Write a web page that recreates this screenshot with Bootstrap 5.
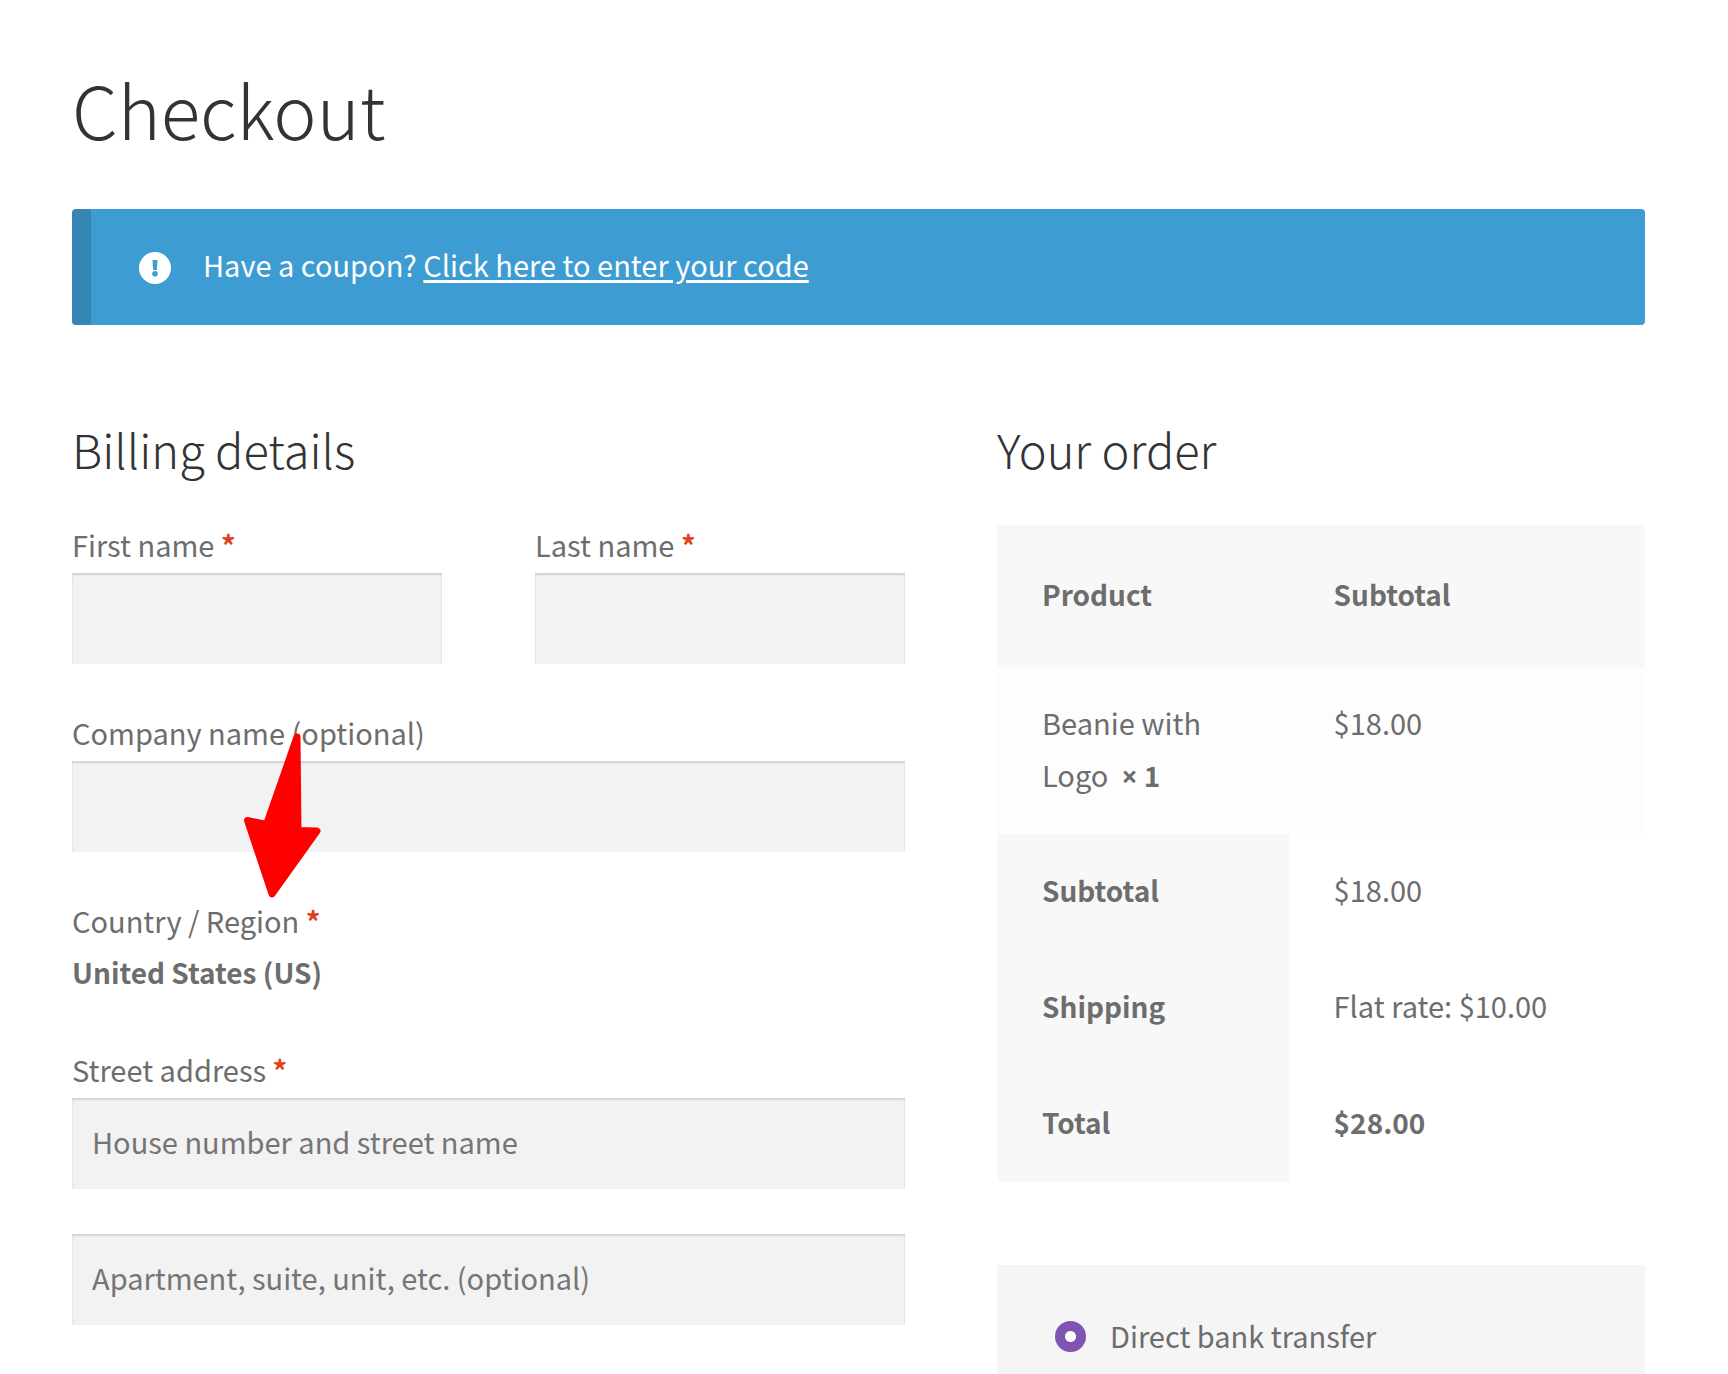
<!DOCTYPE html>
<html lang="en">
<head>
<meta charset="utf-8">
<meta name="viewport" content="width=device-width, initial-scale=1">
<title>Checkout</title>
<link rel="stylesheet" href="https://cdn.jsdelivr.net/npm/bootstrap@5.3.0/dist/css/bootstrap.min.css">
<style>
  body { font-family: "Source Sans Pro", "Noto Sans CJK SC", "Noto Sans", sans-serif; font-size: 29px; line-height: 52px; color: #6d6d6d; background: #fff; }
  .page { padding: 54px 83px 0 72px; }
  h1, h2 { color: #333; font-weight: 300; margin: 0; }
  h1 { font-size: 73px; line-height: 108px; margin-bottom: 47px; }
  h2 { font-size: 47px; line-height: 68px; margin-bottom: 38px; }
  .order h2 { margin-bottom: 42px; }
  strong, th { font-size: 28px; font-weight: 700; }
  td strong { line-height: 1; }
  .coupon { background: #3d9cd2; border: 0; border-left: 19px solid #3585b5; border-radius: 4px; color: #fff; padding: 29px 48px 35px; gap: 32px; margin-bottom: 90px; }
  .coupon a { color: #fff; text-decoration-thickness: 3px; text-underline-offset: 3px; }
  .coupon svg { width: 32px; height: 32px; flex: none; margin-top: 8px; }
  .columns { gap: 92px; }
  .billing { flex: 833 1 0; min-width: 0; }
  .order { flex: 648 1 0; min-width: 0; }
  .fields { gap: 45px; }
  .names { gap: 93px; }
  .form-label { display: block; line-height: 46px; margin: 0 0 6px; }
  .need { color: #e2401c; font-weight: 700; line-height: 1; }
  .box { height: 91px; border: 0; border-radius: 0; background: #f2f2f2; color: #6d6d6d; font-size: 29px; padding: 0 20px 5px; box-shadow: inset 0 2px 2px rgba(0,0,0,.13), inset 1px 0 1px rgba(0,0,0,.02), inset -1px 0 1px rgba(0,0,0,.02); }
  .box::placeholder { color: #757575; }
  .box:focus { background: #ededed; }
  .arrow { width: 78px; height: 166px; left: 171px; top: 212px; pointer-events: none; }
  .totals { color: inherit; margin: 0 0 83px; table-layout: fixed; }
  .totals th, .totals td { border: 0; box-shadow: none; color: inherit; padding: 30px 45px 34px; vertical-align: top; }
  .totals thead th { padding: 43px 45px 47px; background: #f8f8f8; }
  .totals td { padding-top: 29px; padding-bottom: 35px; }
  .totals tbody td { background: #fdfdfd; padding: 29px 45px 34px; }
  .totals tfoot th { background: #f8f8f8; }
  .totals tfoot td { background: #fff; padding: 29px 45px 35px; }
  .c-name { width: 45%; }
  .times { font-family: "Noto Sans", sans-serif; line-height: 1; }
  .pay { background: #f5f5f5; padding: 45px 58px 12px; }
  .pay .form-check-input { width: 31px; height: 31px; margin: 0; border: 0; background: #fff; flex: none; }
  .pay .form-check-input:checked { background: radial-gradient(circle, #fff 0 5px, #7f54b3 6px); }
  .pay label { margin-bottom: 2px; line-height: 50px; }
</style>
<script src="https://cdn.jsdelivr.net/npm/bootstrap@5.3.0/dist/js/bootstrap.bundle.min.js"></script>
</head>
<body>
<main class="page">
  <h1>Checkout</h1>
  <div class="alert coupon d-flex align-items-center" role="status">
    <svg viewBox="0 0 32 32" aria-hidden="true"><circle cx="16" cy="16" r="16" fill="#fff"/><path d="M13.500 8h5l-.6 10h-3.800z" fill="#3d9cd2"/><circle cx="16" cy="21.800" r="2.800" fill="#3d9cd2"/></svg>
    <div>Have a coupon? <a href="#coupon">Click here to enter your code</a></div>
  </div>

  <form class="columns d-flex align-items-start">
    <section class="billing">
      <h2>Billing details</h2>
      <div class="fields d-flex flex-column position-relative">
        <div class="names d-flex">
          <div class="flex-fill w-50"><label class="form-label" for="first">First name <span class="need">*</span></label><input class="form-control box" id="first" type="text" required></div>
          <div class="flex-fill w-50"><label class="form-label" for="last">Last name <span class="need">*</span></label><input class="form-control box" id="last" type="text" required></div>
        </div>
        <div><label class="form-label" for="company">Company name (optional)</label><input class="form-control box" id="company" type="text"></div>
        <div><div class="form-label">Country / Region <span class="need">*</span></div><strong class="form-label">United States (US)</strong></div>
        <div><label class="form-label" for="street">Street address <span class="need">*</span></label><input class="form-control box" id="street" type="text" placeholder="House number and street name" required></div>
        <input class="form-control box" type="text" aria-label="Apartment" placeholder="Apartment, suite, unit, etc. (optional)">
        <svg class="arrow position-absolute" viewBox="0 0 78 166" aria-hidden="true"><path d="M54 4 L23.500 91.500 L4.500 87.500 L29 161 L74 98 L55 97.500 Z" fill="#f00" stroke="#f00" stroke-width="7" stroke-linejoin="round"/></svg>
      </div>
    </section>

    <section class="order">
      <h2>Your order</h2>
      <table class="table totals">
        <thead><tr><th class="c-name" scope="col">Product</th><th scope="col">Subtotal</th></tr></thead>
        <tbody><tr><td>Beanie with Logo&nbsp; <strong><span class="times">×</span>&nbsp;1</strong></td><td>$18.00</td></tr></tbody>
        <tfoot>
          <tr><th scope="row">Subtotal</th><td>$18.00</td></tr>
          <tr><th scope="row">Shipping</th><td>Flat rate: $10.00</td></tr>
          <tr><th scope="row">Total</th><td><strong>$28.00</strong></td></tr>
        </tfoot>
      </table>
      <div class="pay d-flex align-items-center gap-4">
        <input class="form-check-input" type="radio" name="payment" id="bank" checked>
        <label for="bank">Direct bank transfer</label>
      </div>
    </section>
  </form>
</main>
</body>
</html>
